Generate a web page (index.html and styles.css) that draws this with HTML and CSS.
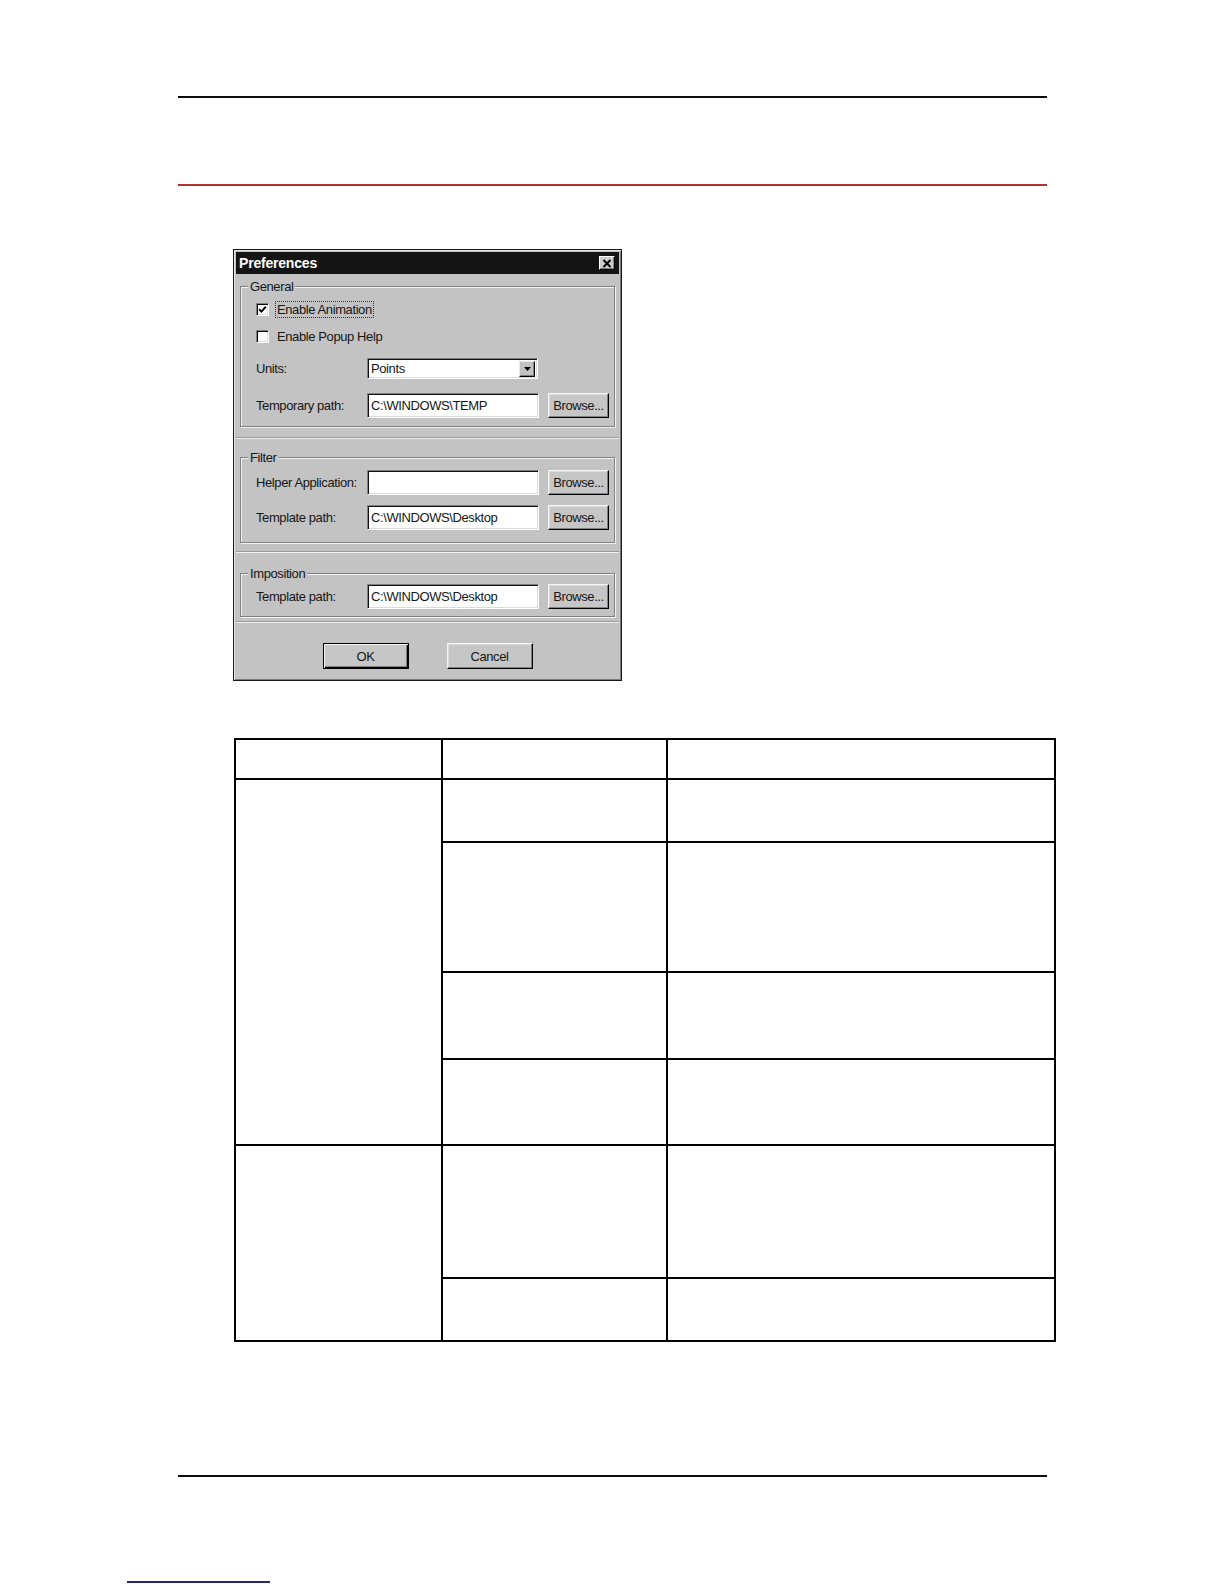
FILE: index.html
```html
<!DOCTYPE html>
<html lang="en">
<head>
<meta charset="utf-8">
<title>Preferences</title>
<link rel="stylesheet" href="styles.css">
</head>
<body>
<div class="page">
  <div class="rule rule-top"></div>
  <div class="rule rule-red"></div>

  <div class="dialog">
    <div class="titlebar">
      <span class="title">Preferences</span>
      <span class="close-btn">
        <svg width="10" height="9" viewBox="0 0 10 9"><path d="M1.5 1 L8.5 8 M8.5 1 L1.5 8" stroke="#000" stroke-width="2" fill="none"/></svg>
      </span>
    </div>

    <div class="group group-general">
      <div class="group-title">General</div>
      <div class="check-row row-anim">
        <span class="checkbox">
          <svg width="9" height="9" viewBox="0 0 9 9"><polyline points="1.2,4.2 3.4,6.6 7.8,1.8" stroke="#000" stroke-width="2" fill="none"/></svg>
        </span>
        <span class="check-label focused">Enable Animation</span>
      </div>
      <div class="check-row row-popup">
        <span class="checkbox"></span>
        <span class="check-label">Enable Popup Help</span>
      </div>
      <div class="field-row row-units">
        <span class="label">Units:</span>
        <div class="combo">
          <span class="combo-text">Points</span>
          <span class="combo-btn">
            <svg width="7" height="4" viewBox="0 0 7 4"><path d="M0 0 H7 L3.5 4 Z" fill="#000"/></svg>
          </span>
        </div>
      </div>
      <div class="field-row row-temp">
        <span class="label">Temporary path:</span>
        <div class="input">C:\WINDOWS\TEMP</div>
        <span class="btn browse">Browse...</span>
      </div>
    </div>

    <div class="sep sep-1"></div>

    <div class="group group-filter">
      <div class="group-title">Filter</div>
      <div class="field-row row-helper">
        <span class="label">Helper Application:</span>
        <div class="input"></div>
        <span class="btn browse">Browse...</span>
      </div>
      <div class="field-row row-template">
        <span class="label">Template path:</span>
        <div class="input">C:\WINDOWS\Desktop</div>
        <span class="btn browse">Browse...</span>
      </div>
    </div>

    <div class="sep sep-2"></div>

    <div class="group group-imposition">
      <div class="group-title">Imposition</div>
      <div class="field-row row-imp">
        <span class="label">Template path:</span>
        <div class="input">C:\WINDOWS\Desktop</div>
        <span class="btn browse">Browse...</span>
      </div>
    </div>

    <div class="sep sep-3"></div>

    <div class="actions">
      <span class="btn action default">OK</span>
      <span class="btn action">Cancel</span>
    </div>
  </div>

  <table class="grid">
    <colgroup>
      <col class="c1">
      <col class="c2">
      <col class="c3">
    </colgroup>
    <tbody>
      <tr class="r-head"><td></td><td></td><td></td></tr>
      <tr class="r1"><td rowspan="4"></td><td></td><td></td></tr>
      <tr class="r2"><td></td><td></td></tr>
      <tr class="r3"><td></td><td></td></tr>
      <tr class="r4"><td></td><td></td></tr>
      <tr class="r5"><td rowspan="2"></td><td></td><td></td></tr>
      <tr class="r6"><td></td><td></td></tr>
    </tbody>
  </table>

  <div class="rule rule-bottom"></div>
  <div class="footer-link"></div>
</div>
</body>
</html>
```

FILE: styles.css
```css
html, body {
  margin: 0;
  padding: 0;
  background: #ffffff;
}

.page {
  display: flow-root;
  width: 1224px;
  height: 1584px;
  overflow: hidden;
  font-family: "Liberation Sans", Arial, sans-serif;
}

.rule {
  margin-left: 178px;
  width: 869px;
  height: 2px;
}

.rule-top {
  margin-top: 96px;
  background: #0c0c0c;
}

.rule-red {
  margin-top: 86px;
  background: #b3302f;
}

.rule-bottom {
  margin-top: 133px;
  background: #0c0c0c;
}

.footer-link {
  margin-top: 104px;
  margin-left: 127px;
  width: 143px;
  height: 0;
  border-bottom: 2px solid #23237e;
}

/* ---------- dialog ---------- */
.dialog {
  box-sizing: border-box;
  margin-top: 63px;
  margin-left: 233px;
  width: 389px;
  height: 432px;
  padding: 2px;
  background: #c3c3c3;
  border: 1px solid #1a1a1a;
  box-shadow: inset 1px 1px 0 #e4e4e4, inset -1px -1px 0 #7c7c7c;
  font-size: 13px;
  letter-spacing: -0.4px;
  color: #161616;
  overflow: hidden;
}

.titlebar {
  height: 22px;
  display: flex;
  align-items: center;
  justify-content: space-between;
  padding: 0 4px 0 3px;
  background: #141414;
}

.title {
  color: #ffffff;
  font-weight: bold;
  font-size: 14px;
  letter-spacing: -0.2px;
  line-height: 22px;
}

.close-btn {
  box-sizing: border-box;
  width: 16px;
  height: 14px;
  display: flex;
  align-items: center;
  justify-content: center;
  background: #cdcdcd;
  border: 1px solid;
  border-color: #ffffff #000000 #000000 #ffffff;
  box-shadow: inset -1px -1px 0 #808080;
}

/* ---------- group boxes ---------- */
.group {
  margin: 0 4px;
  padding: 0 5px 0 15px;
  border: 1px solid #808080;
  box-shadow: inset 1px 1px 0 #f4f4f4, 1px 1px 0 #f4f4f4;
}

.group-title {
  display: table;
  height: 16px;
  line-height: 16px;
  margin: -8px 0 0 -8px;
  padding: 0 2px;
  background: #c3c3c3;
}

.group-general {
  margin-top: 12px;
  padding-bottom: 8px;
}

.group-filter {
  margin-top: 18px;
  padding-bottom: 12px;
}

.group-imposition {
  margin-top: 20px;
  padding-bottom: 7px;
}

.sep {
  height: 0;
  border-top: 1px solid #9a9a9a;
  border-bottom: 1px solid #efefef;
}

.sep-1 { margin-top: 10px; }
.sep-2 { margin-top: 8px; }
.sep-3 { margin-top: 4px; }

/* ---------- checkboxes ---------- */
.check-row {
  display: flex;
  align-items: center;
  height: 18px;
}

.row-anim { margin-top: 5px; }
.row-popup { margin-top: 9px; }

.checkbox {
  box-sizing: border-box;
  width: 13px;
  height: 13px;
  display: flex;
  align-items: center;
  justify-content: center;
  background: #ffffff;
  border: 1px solid;
  border-color: #808080 #ffffff #ffffff #808080;
  box-shadow: inset 1px 1px 0 #000000, inset -1px -1px 0 #dcdcdc;
}

.check-label {
  margin-left: 6px;
  padding: 0 1px;
  border: 1px solid transparent;
  line-height: 15px;
}

.check-label.focused {
  border: 1px dotted #333333;
}

/* ---------- fields ---------- */
.field-row {
  display: flex;
  align-items: center;
}

.row-units { margin-top: 13px; height: 21px; }
.row-temp { margin-top: 14px; height: 25px; }
.row-helper { margin-top: 4px; height: 25px; }
.row-template { margin-top: 10px; height: 25px; }
.row-imp { margin-top: 2px; height: 25px; }

.label {
  width: 111px;
  flex: none;
}

.input {
  box-sizing: border-box;
  width: 172px;
  height: 25px;
  padding: 3px 0 0 3px;
  line-height: 17px;
  background: #ffffff;
  border: 1px solid;
  border-color: #808080 #ffffff #ffffff #808080;
  box-shadow: inset 1px 1px 0 #101010, inset -1px -1px 0 #dcdcdc;
  white-space: nowrap;
}

.combo {
  box-sizing: border-box;
  width: 171px;
  height: 21px;
  display: flex;
  align-items: center;
  justify-content: space-between;
  padding: 2px 2px 2px 3px;
  background: #ffffff;
  border: 1px solid;
  border-color: #808080 #ffffff #ffffff #808080;
  box-shadow: inset 1px 1px 0 #101010, inset -1px -1px 0 #dcdcdc;
}

.combo-btn {
  box-sizing: border-box;
  width: 16px;
  height: 16px;
  display: flex;
  align-items: center;
  justify-content: center;
  background: #c3c3c3;
  border: 1px solid;
  border-color: #e8e8e8 #000000 #000000 #e8e8e8;
  box-shadow: inset -1px -1px 0 #808080;
}

/* ---------- buttons ---------- */
.btn {
  box-sizing: border-box;
  display: flex;
  align-items: center;
  justify-content: center;
  background: #c6c6c6;
  border: 1px solid;
  border-color: #f4f4f4 #000000 #000000 #f4f4f4;
  box-shadow: inset -1px -1px 0 #808080, inset 1px 1px 0 #dadada;
}

.browse {
  width: 61px;
  height: 25px;
  margin-left: 9px;
}

.actions {
  display: flex;
  justify-content: center;
  gap: 38px;
  margin-top: 20px;
}

.action {
  width: 86px;
  height: 26px;
}

.action.default {
  border: 1px solid #000000;
  box-shadow: inset 1px 1px 0 #f4f4f4, inset -1px -1px 0 #000000, inset -2px -2px 0 #808080;
}

/* ---------- table ---------- */
.grid {
  margin-top: 57px;
  margin-left: 234px;
  width: 820px;
  table-layout: fixed;
  border-collapse: collapse;
  border: 2px solid #000000;
}

.grid col.c1 { width: 207px; }
.grid col.c2 { width: 225px; }
.grid col.c3 { width: 388px; }

.grid td {
  border: 2px solid #000000;
  padding: 0;
}

.grid .r-head { height: 40px; }
.grid .r1 { height: 63px; }
.grid .r2 { height: 130px; }
.grid .r3 { height: 87px; }
.grid .r4 { height: 86px; }
.grid .r5 { height: 133px; }
.grid .r6 { height: 63px; }
```
